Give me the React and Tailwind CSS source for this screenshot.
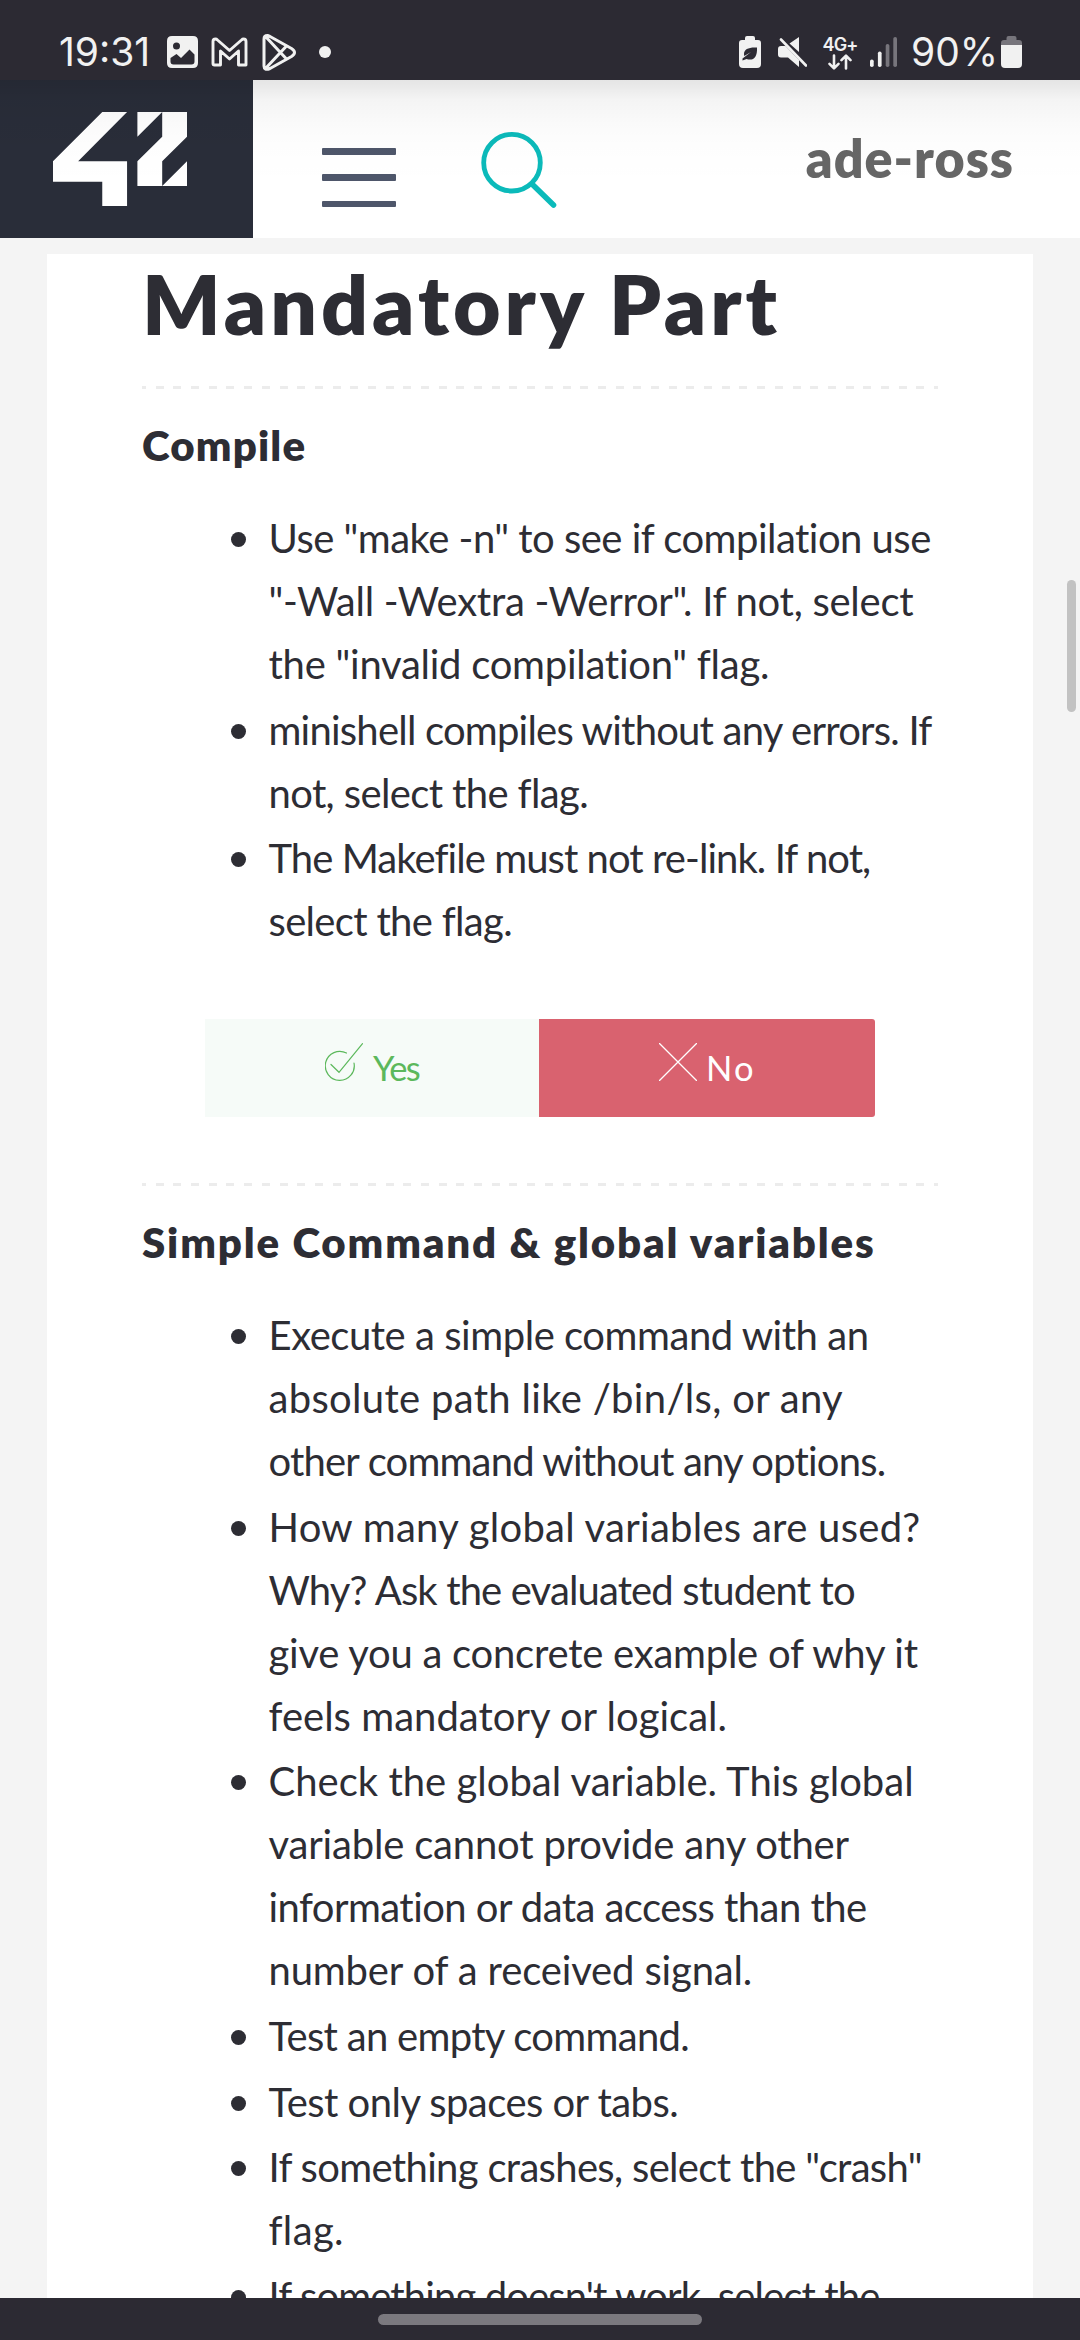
import React from "react";

const compileItems = [
  [
    { text: 'Use "make -n" to see if compilation use', tracking: "tracking-[-0.52px]" },
    { text: '"-Wall -Wextra -Werror". If not, select', tracking: "tracking-[-0.27px]" },
    { text: 'the "invalid compilation" flag.', tracking: "tracking-[-0.26px]" },
  ],
  [
    { text: "minishell compiles without any errors. If", tracking: "tracking-[-0.78px]" },
    { text: "not, select the flag.", tracking: "tracking-[-0.62px]" },
  ],
  [
    { text: "The Makefile must not re-link. If not,", tracking: "tracking-[-0.94px]" },
    { text: "select the flag.", tracking: "tracking-[-0.68px]" },
  ],
];

const commandItems = [
  [
    { text: "Execute a simple command with an", tracking: "tracking-[-0.46px]" },
    { text: "absolute path like /bin/ls, or any", tracking: "tracking-[0.32px]" },
    { text: "other command without any options.", tracking: "tracking-[-0.82px]" },
  ],
  [
    { text: "How many global variables are used?", tracking: "tracking-[0.28px]" },
    { text: "Why? Ask the evaluated student to", tracking: "tracking-[-0.86px]" },
    { text: "give you a concrete example of why it", tracking: "tracking-[-0.24px]" },
    { text: "feels mandatory or logical.", tracking: "tracking-[0.02px]" },
  ],
  [
    { text: "Check the global variable. This global", tracking: "tracking-[0.01px]" },
    { text: "variable cannot provide any other", tracking: "tracking-[-0.18px]" },
    { text: "information or data access than the", tracking: "tracking-[-0.55px]" },
    { text: "number of a received signal.", tracking: "tracking-[-0.15px]" },
  ],
  [{ text: "Test an empty command.", tracking: "tracking-[-0.7px]" }],
  [{ text: "Test only spaces or tabs.", tracking: "tracking-[-0.54px]" }],
  [
    { text: 'If something crashes, select the "crash"', tracking: "tracking-[-0.67px]" },
    { text: "flag.", tracking: "tracking-[0.35px]" },
  ],
  [{ text: "If something doesn't work, select the", tracking: "tracking-[-0.88px]" }],
];

function StatusBar() {
  return (
    <div className="flex h-[80px] shrink-0 items-center bg-[#2c2a33] pt-[24px] pr-[58px] pl-[59px] font-['Inter',sans-serif] text-[39px] text-[#f1f1f1]">
      <span className="w-[108px] leading-[40px] whitespace-nowrap">19:31</span>
      <svg width="31" height="32" viewBox="0 0 31 32">
        <path
          fillRule="evenodd"
          fill="#f1f1f1"
          d="M5 0H26Q31 0 31 5V27Q31 32 26 32H5Q0 32 0 27V5Q0 0 5 0ZM9.500 6.500A3.500 3.500 0 1 0 9.500 13.500A3.500 3.500 0 1 0 9.500 6.500ZM3.500 22V25.500Q3.500 28.500 6.500 28.500H24.500Q27.500 28.500 27.500 25.500V18.500L22.500 13.500L14 22L9.500 18Z"
        />
      </svg>
      <svg className="ml-[13px]" width="37" height="30" viewBox="0 0 37 30" fill="none" stroke="#f1f1f1" strokeWidth="2.9" strokeLinejoin="round">
        <path d="M2 4.500Q2 2 4.500 2Q5.500 2 6.500 3L18.500 13.500L30.500 3Q31.500 2 32.500 2Q35 2 35 4.500V28H27.500V14L18.500 22L9.500 14V28H3.500Q2 28 2 26.500Z" />
      </svg>
      <svg className="ml-[14px]" width="34" height="37" viewBox="0 0 34 37" fill="none" stroke="#f1f1f1" strokeWidth="3" strokeLinejoin="round" strokeLinecap="round">
        <path d="M2 5Q2 1.500 5.500 1.500L8 2.500L29.500 14.500Q32.500 16.500 32.500 18.500Q32.500 20.500 29.500 22.500L8 34.500Q2 37 2 32ZM3.500 2.500L24.500 25M3.500 34.500L24.500 12" />
      </svg>
      <span className="ml-[23px] size-[12px] rounded-full bg-[#f1f1f1]" />

      <svg className="ml-auto" width="22" height="32" viewBox="0 0 22 32">
        <path fill="#f1f1f1" d="M6 2Q6 0 8 0H14Q16 0 16 2V4H19Q22 4 22 7V28Q22 32 18 32H4Q0 32 0 28V7Q0 4 3 4H6Z" />
        <path fill="#2c2a33" d="M18 11.500C10 11 5 13 5 18Q5 19 5.300 20L12 16L3.500 22.500L3.500 24.500L7.500 23C14 25 18.500 22 18 11.500Z" />
      </svg>
      <svg className="ml-[17px]" width="29" height="30" viewBox="0 0 29 30">
        <path fill="#f1f1f1" d="M11.500 6.500L21 0V15ZM3 9H7.500L21 23V30L10 20.500H3Q0 20.500 0 17.500V12Q0 9 3 9Z" />
        <path d="M3 2.500L28 28.500" stroke="#f1f1f1" strokeWidth="2.600" strokeLinecap="round" />
      </svg>
      <div className="mt-px ml-[15px] flex w-[36px] flex-col items-center">
        <span className="text-[18px] leading-[18px] font-semibold tracking-[-0.9px] whitespace-nowrap">4G+</span>
        <svg width="24" height="16" viewBox="0 0 24 16" fill="none" stroke="#f1f1f1" strokeWidth="2.600" strokeLinecap="round" strokeLinejoin="round">
          <path d="M6 1.500V14M1.500 9.800L6 14.300L10.500 9.800M18 14.500V2M13.500 6.200L18 1.700L22.500 6.200" />
        </svg>
      </div>
      <svg className="ml-[12px]" width="27" height="30" viewBox="0 0 27 30">
        <rect x="0" y="22.500" width="3.700" height="7.500" rx="1.800" fill="#f1f1f1" />
        <rect x="7.900" y="14.500" width="3.700" height="15.500" rx="1.800" fill="#f1f1f1" />
        <rect x="15.700" y="7" width="3.700" height="23" rx="1.800" fill="#77757c" />
        <rect x="23.300" y="0" width="3.700" height="30" rx="1.800" fill="#77757c" />
      </svg>
      <span className="ml-[14px] w-[90px] leading-[40px] whitespace-nowrap">90%</span>
      <svg width="21" height="32" viewBox="0 0 21 32">
        <path fill="#77757c" d="M5.500 2Q5.500 0 7.500 0H13.500Q15.500 0 15.500 2V4H18Q21 4 21 7V12H0V7Q0 4 3 4H5.500Z" />
        <path fill="#f1f1f1" d="M0 9H21V28Q21 32 17 32H4Q0 32 0 28Z" />
      </svg>
    </div>
  );
}

function Header() {
  return (
    <header className="relative flex h-[158px] shrink-0 bg-white">
      <div className="flex w-[253px] items-start bg-[#292d39] pt-[32px] pl-[53px]">
        <svg width="134" height="94" viewBox="154 336 389 282" preserveAspectRatio="none" fill="#fff">
          <path d="M297 336H369L227 484H369V618H297V545H154V484Z" />
          <path d="M399 336H471L399 410ZM471 336H543V410L471 484V558H399V484L471 410ZM543 484V558H471Z" />
        </svg>
      </div>
      <div className="mt-[68px] ml-[69px] flex h-[59px] w-[74px] flex-col justify-between">
        <span className="h-[6.5px] rounded-[1px] bg-[#4e566a]" />
        <span className="h-[6.5px] rounded-[1px] bg-[#4e566a]" />
        <span className="h-[6.5px] rounded-[1px] bg-[#4e566a]" />
      </div>
      <svg className="mt-[51px] ml-[84px]" width="78" height="78" viewBox="0 0 78 78" fill="none" stroke="#0bbaba" strokeLinecap="round">
        <circle cx="32" cy="31.700" r="28.300" strokeWidth="4.800" />
        <path d="M53 54L73.500 74" strokeWidth="5.600" />
      </svg>
      <span className="mt-[47px] mr-[66px] ml-auto text-[52px] leading-[62px] font-extrabold tracking-[1px] text-[#666]">ade-ross</span>
      <div className="pointer-events-none absolute inset-0 bg-[linear-gradient(to_bottom,rgba(0,0,0,0.1)_0px,rgba(0,0,0,0.085)_6px,rgba(0,0,0,0.045)_20px,rgba(0,0,0,0.02)_44px,rgba(0,0,0,0.008)_66px,transparent_105px)]" />
    </header>
  );
}

function Divider() {
  return (
    <div className="h-[3px] w-full bg-[repeating-linear-gradient(90deg,#ececec_0px,#ececec_4px,transparent_4px,transparent_13.69px,#ececec_13.69px,#ececec_17.69px)]" />
  );
}

function BulletList({ items }) {
  return (
    <ul className="mt-[37px] ml-[89px] flex flex-col gap-[2.6px] text-[40px] leading-[63px]">
      {items.map((lines) => (
        <li key={lines[0].text} className="flex gap-[22.5px]">
          <span className="mt-[25px] size-[15px] shrink-0 rounded-full bg-[#2d2d34]" />
          <div className="flex flex-col whitespace-nowrap">
            {lines.map((line) => (
              <span key={line.text} className={line.tracking}>
                {line.text}
              </span>
            ))}
          </div>
        </li>
      ))}
    </ul>
  );
}

function Answers() {
  return (
    <div className="mt-[66px] mb-[66px] ml-[63px] flex h-[98px] w-[670px] text-[34.5px] leading-[42px]">
      <button className="flex w-[334px] items-start bg-[#f6fbf8] pl-[120px] text-[#5cb85c]">
        <svg className="mt-[24px]" width="38" height="38" viewBox="0 0 38 38" fill="none" stroke="#5cb85c" strokeWidth="1.200" strokeLinecap="round">
          <path d="M21.500 10A14.500 14.500 0 1 0 29 20M6 21.500L14 29.300L37.500 0.700" />
        </svg>
        <span className="mt-[28px] ml-[10px] tracking-[-1.6px]">Yes</span>
      </button>
      <button className="flex w-[336px] items-start rounded-r-[3px] bg-[#d9626f] pl-[120px] text-white">
        <svg className="mt-[24px]" width="38" height="38" viewBox="0 0 38 38" stroke="#fff" strokeWidth="1.300" strokeLinecap="round">
          <path d="M0.500 0.500L37.500 37.500M37.500 0.500L0.500 37.500" />
        </svg>
        <span className="mt-[28px] ml-[9px] tracking-[2.2px]">No</span>
      </button>
    </div>
  );
}

export default function App() {
  return (
    <div className="relative flex h-[2340px] w-[1080px] flex-col overflow-hidden bg-[#f4f4f4] font-['Lato',sans-serif] text-[#2d2d34]">
      <StatusBar />
      <Header />
      <main className="mx-[47px] mt-[16px] min-h-0 flex-1 overflow-hidden bg-white px-[95px]">
        <h1 className="mb-[34px] text-[82px] leading-[98px] font-extrabold tracking-[4px] whitespace-nowrap">Mandatory Part</h1>
        <Divider />
        <h2 className="mt-[31px] text-[42px] leading-[50px] font-extrabold tracking-[1.15px]">Compile</h2>
        <BulletList items={compileItems} />
        <Answers />
        <Divider />
        <h2 className="mt-[31px] text-[42px] leading-[50px] font-extrabold tracking-[1.83px] whitespace-nowrap">
          Simple Command &amp; global variables
        </h2>
        <BulletList items={commandItems} />
      </main>
      <footer className="flex h-[42px] shrink-0 items-start justify-center bg-[#2c2a33] pt-[16px]">
        <span className="h-[11px] w-[324px] rounded-full bg-[#7b797f]" />
      </footer>
      <div className="absolute top-[580px] right-[4px] h-[132px] w-[9px] rounded-full bg-[#c2c2c2]" />
    </div>
  );
}
